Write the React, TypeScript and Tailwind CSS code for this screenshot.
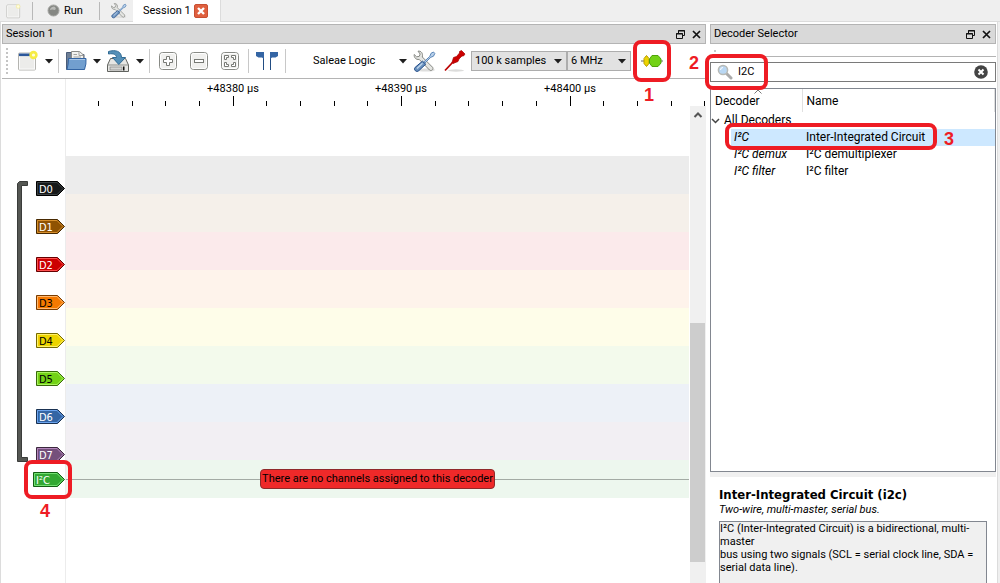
import React from "react";

const channels = [
  { name: "D0", fill: "#16191a", edge: "#000000", inner: "#3c4143", text: "#ffffff", lane: "bg-[#ececec]" },
  { name: "D1", fill: "#8f5202", edge: "#472901", inner: "#d78f2c", text: "#ffffff", lane: "bg-[#f5f0ea]" },
  { name: "D2", fill: "#cc0000", edge: "#660000", inner: "#ff5050", text: "#ffffff", lane: "bg-[#fbeaeb]" },
  { name: "D3", fill: "#f57900", edge: "#7a3c00", inner: "#ffb870", text: "#000000", lane: "bg-[#fef3eb]" },
  { name: "D4", fill: "#edd400", edge: "#766a00", inner: "#fff06a", text: "#000000", lane: "bg-[#fefde9]" },
  { name: "D5", fill: "#73d216", edge: "#39690b", inner: "#a9f35e", text: "#000000", lane: "bg-[#f3faec]" },
  { name: "D6", fill: "#3465a4", edge: "#1a3252", inner: "#6ba4ef", text: "#ffffff", lane: "bg-[#edf1f7]" },
  { name: "D7", fill: "#75507b", edge: "#3a283d", inner: "#b385bb", text: "#ffffff", lane: "bg-[#f2eff3]" },
];

const decoders = [
  { id: "I²C", name: "Inter-Integrated Circuit", selected: true },
  { id: "I²C demux", name: "I²C demultiplexer", selected: false },
  { id: "I²C filter", name: "I²C filter", selected: false },
];

const majorTicks = [
  { x: 167, label: "+48380 µs" },
  { x: 335, label: "+48390 µs" },
  { x: 504, label: "+48400 µs" },
];
const minorTicks = [32, 66, 99, 133, 200, 234, 268, 301, 369, 402, 436, 470, 537, 571, 605, 638];

function Tag({ name, fill, edge, inner, text, wide = false }: {
  name: string; fill: string; edge: string; inner: string; text: string; wide?: boolean;
}) {
  const w = wide ? 32 : 29;
  return (
    <svg width={w} height="15" viewBox={`0 0 ${w} 15`} className="block shrink-0">
      <path d={`M.5 .5H${w - 7.5}L${w - 0.5} 7.5L${w - 7.5} 14.5H.5Z`} fill={fill} stroke={edge} />
      <path d={`M1.5 1.5H${w - 8}L${w - 2} 7.5L${w - 8} 13.5H1.5Z`} fill="none" stroke={inner} />
      <text x="3" y="12" fontSize="11" fill={text} className="font-['DejaVu_Sans_Condensed','DejaVu_Sans',sans-serif]">{name}</text>
    </svg>
  );
}

function Arrow() {
  return (
    <svg width="8" height="5" viewBox="0 0 8 5" className="shrink-0">
      <path d="M0 0H8L4 4.6Z" fill="#1e1e1e" />
    </svg>
  );
}

function Separator() {
  return <div className="h-6 w-px shrink-0 bg-[#c8c8c8]" />;
}

function NewIcon({ size, faded = false }: { size: number; faded?: boolean }) {
  return (
    <svg width={size} height={size} viewBox="0 0 24 24" className="shrink-0">
      <rect x="2.5" y="4" width="17" height="17" rx="1" fill="#ececea" stroke="#b4b4b0" />
      <rect x="3.5" y="5" width="15" height="15" fill="none" stroke="#fbfbfb" />
      {!faded && <rect x="3" y="4.5" width="13" height="2.6" fill="#2b579b" />}
      <circle cx="17.5" cy="6" r={faded ? 3 : 4.2} fill={faded ? "#f5efb0" : "#f6ec45"} />
      <circle cx="17.5" cy="6" r="1.6" fill="#fffde0" />
    </svg>
  );
}

function FolderIcon() {
  return (
    <svg width="24" height="24" viewBox="0 0 24 24" className="shrink-0">
      <path d="M2.5 20.5V3.5H9L10.5 5.5H20V20.5Z" fill="#6e7f96" stroke="#4a5c78" />
      <path d="M7.5 13V2.5H15.5L19.5 6V13Z" fill="#f2f2f0" stroke="#8b8b88" />
      <path d="M15 2.5V6.5H19M9.5 5.5H13M9.5 8H17" fill="none" stroke="#a3a3a0" />
      <path d="M4.5 9.5H22Q22.5 15 20.5 20.5H3Q4.5 15 4.5 9.5Z" fill="#729fcf" stroke="#3465a4" />
      <path d="M5.5 10.5H21" stroke="#a9c7e8" />
    </svg>
  );
}

function SaveIcon() {
  return (
    <svg width="24" height="24" viewBox="0 0 24 24" className="shrink-0">
      <path d="M4.5 9.5H19.5L22.5 16V22.5H1.5V16Z" fill="#e6e6e3" stroke="#60625e" />
      <path d="M1.5 16H22.5" stroke="#8f918d" />
      <rect x="4" y="18" width="12" height="3" fill="#d4d5d2" stroke="#777" strokeWidth=".6" />
      <rect x="17" y="17.5" width="1.5" height="4" fill="#111" />
      <path d="M2.5 2.5C9 .5 15.5 2 15.5 8.5H19.5L12.8 15.5L6.5 8.5H10.5C10.5 6 8 4 2.5 5Z" fill="#5590b8" stroke="#2f6a94" />
    </svg>
  );
}

function ZoomIcon({ kind }: { kind: "in" | "out" | "fit" }) {
  return (
    <svg width="20" height="20" viewBox="0 0 20 20">
      <rect x="1.5" y="1.5" width="17" height="17" rx="3" fill="#f0f0ee" stroke="#888a85" />
      <rect x="2.5" y="2.5" width="15" height="15" rx="2" fill="none" stroke="#fff" />
      <g fill="#fff" stroke="#777974">
        {kind === "in" && <path d="M8.5 5.5H11.5V8.5H14.5V11.5H11.5V14.5H8.5V11.5H5.5V8.5H8.5Z" />}
        {kind === "out" && <rect x="5.5" y="8.5" width="9" height="3" />}
        {kind === "fit" && (
          <path d="M4.5 4.5H8.5V6.5H6.5V8.5H4.5ZM15.5 4.5H11.5V6.5H13.5V8.5H15.5ZM4.5 15.5H8.5V13.5H6.5V11.5H4.5ZM15.5 15.5H11.5V13.5H13.5V11.5H15.5Z" />
        )}
      </g>
    </svg>
  );
}

function FlagsIcon() {
  return (
    <svg width="24" height="20" viewBox="0 0 24 20">
      <path d="M1 1.5H8.5V19M23 1.5H15.5V19" fill="none" stroke="#224d83" />
      <path d="M1 1H9V8L7 6.5H3.5L1 5Z" fill="#3465a4" />
      <path d="M23 1H15V8L17 6.5H20.5L23 5Z" fill="#3465a4" />
    </svg>
  );
}

function ToolsIcon({ size }: { size: number }) {
  return (
    <svg width={size} height={size} viewBox="0 0 24 24" className="shrink-0">
      <ellipse cx="14" cy="21" rx="9" ry="1.6" fill="#dededd" />
      <path d="M6 2.2L8.2 5L7.2 7.4L4.6 7.8L2.2 5.5C1.8 8.5 4 11 7.2 10.4L17.5 21C19.2 22.6 22 20.2 20.6 18.3L10.3 8C11.2 4.5 9.2 1.6 6 2.2Z" fill="#e4e5e2" stroke="#858782" />
      <path d="M21.5 3L19 4.3L17.8 7.4L11.5 13.2L12.6 14.3L18.8 8.3L21.5 7.2L22.8 4.5Z" fill="#b8d0ea" stroke="#4e7cb1" strokeWidth=".9" />
      <path d="M10.5 12.2L13.7 15.2L6.8 21.7C4.5 23.8 1 20.8 3.2 18.3Z" fill="#6c93bf" stroke="#204a87" />
      <path d="M10.5 14.2L5 19.5" stroke="#c3d9ef" strokeWidth="1.3" />
    </svg>
  );
}

function ProbeIcon() {
  return (
    <svg width="24" height="24" viewBox="0 0 24 24">
      <ellipse cx="14" cy="21.5" rx="8" ry="1.2" fill="#dcdcdb" />
      <path d="M3 21.5L11 13" stroke="#b00" strokeWidth="1.8" />
      <path d="M10 13.5L11.5 8.5L14.5 7.5L17.5 4L17.5 2.5L19.5 1.5L23 5L21.5 7L20 7L17 10L16 12.5L11 14.5Z" fill="#cc0000" stroke="#a40000" strokeWidth=".7" />
    </svg>
  );
}

function WindowButtons() {
  return (
    <div className="flex items-center gap-[7px]">
      <button aria-label="Float" className="block">
        <svg width="9" height="9" viewBox="0 0 9 9">
          <path d="M2.5 3V.5H8.5V5.5H6.5M2 1H9" fill="none" stroke="#111" />
          <path d="M.5 3.5H6.5V8.5H.5ZM0 4H7" fill="none" stroke="#111" />
        </svg>
      </button>
      <button aria-label="Close" className="block">
        <svg width="9" height="9" viewBox="0 0 9 9">
          <path d="M1 1L8 8M8 1L1 8" stroke="#111" strokeWidth="1.7" />
        </svg>
      </button>
    </div>
  );
}

function TitleBar({ title }: { title: string }) {
  return (
    <div className="flex h-5 shrink-0 items-center justify-between border border-[#b4b4b4] bg-[#d9d9d9] pr-1 pl-[3px]">
      <h2>{title}</h2>
      <WindowButtons />
    </div>
  );
}

function Combo({ label, options, className }: { label: string; options: string[]; className: string }) {
  return (
    <div className={`relative flex items-center ${className}`}>
      <select aria-label={label} className="h-5 w-full appearance-none border border-[#adadad] bg-[#e2e2e2] pl-[3px] outline-none">
        {options.map((o) => <option key={o}>{o}</option>)}
      </select>
      <span className="pointer-events-none absolute right-[5px]"><Arrow /></span>
    </div>
  );
}

const frame = "pointer-events-none absolute z-10 rounded-lg border-[4px] border-[#ee1c24]";
const mark = "pointer-events-none absolute z-10 font-['Liberation_Sans',Arial,sans-serif] text-lg leading-5 font-bold not-italic text-[#ee1c24]";

function TopBar() {
  return (
    <header className="flex h-[22px] shrink-0 items-stretch border-b border-[#dcdcdc]">
      <div className="flex w-[133px] items-center">
        <button aria-label="New session" className="ml-[5px]"><NewIcon size={18} faded /></button>
        <div className="ml-[9px] h-[18px] w-px bg-[#b8b8b8]" />
        <button className="ml-3.5 flex items-center gap-1">
          <svg width="13" height="13" viewBox="0 0 13 13">
            <circle cx="6.5" cy="6.5" r="5.5" fill="#858783" stroke="#a4a5a2" />
            <path d="M3 6Q3 3 7 2.5Q10 4 8 6Q5 5 3 6" fill="#b9bab7" />
          </svg>
          Run
        </button>
        <div className="ml-4 h-[18px] w-px bg-[#b8b8b8]" />
        <button aria-label="Settings" className="ml-2.5"><ToolsIcon size={17} /></button>
      </div>
      <div className="-mb-px flex w-[88px] items-center justify-between border-r border-[#dcdcdc] bg-white pr-3 pl-2.5">
        <span>Session 1</span>
        <button aria-label="Close session">
          <svg width="14" height="14" viewBox="0 0 14 14">
            <rect x=".5" y=".5" width="13" height="13" rx="1.5" fill="#e0603f" stroke="#c84f32" />
            <path d="M4 4L10 10M10 4L4 10" stroke="#fff" strokeWidth="2.4" />
          </svg>
        </button>
      </div>
    </header>
  );
}

function Toolbar() {
  return (
    <div className="flex h-[35px] shrink-0 items-center gap-[5px] border-b border-[#b4b4b4]">
      <div className="mr-[3px] ml-1 h-[26px] border-l-2 border-dotted border-[#c4c4c4]" />
      <button aria-label="New" className="flex items-center gap-[5px]"><NewIcon size={24} /><Arrow /></button>
      <Separator />
      <button aria-label="Open" className="flex items-center gap-[5px]"><FolderIcon /><Arrow /></button>
      <button aria-label="Save" className="flex items-center gap-1.5"><SaveIcon /><Arrow /></button>
      <Separator />
      <button aria-label="Zoom in" className="flex w-[26px] justify-center"><ZoomIcon kind="in" /></button>
      <button aria-label="Zoom out" className="flex w-[26px] justify-center"><ZoomIcon kind="out" /></button>
      <button aria-label="Zoom to fit" className="flex w-[26px] justify-center"><ZoomIcon kind="fit" /></button>
      <Separator />
      <button aria-label="Show cursors" className="flex w-[26px] justify-center"><FlagsIcon /></button>
      <Separator />
      <button className="flex w-[116px] items-center justify-between pl-[22px]"><span>Saleae Logic</span><Arrow /></button>
      <button aria-label="Configure device"><ToolsIcon size={24} /></button>
      <button aria-label="Configure channels" className="flex w-[25px] justify-center"><ProbeIcon /></button>
      <div className="flex">
        <Combo label="Sample count" options={["100 k samples", "1 M samples"]} className="w-24" />
        <Combo label="Sample rate" options={["6 MHz", "12 MHz"]} className="w-16" />
      </div>
      <div className="relative">
        <button aria-label="Add protocol decoder" className="flex w-8 justify-center">
          <svg width="22" height="14" viewBox="0 0 22 14">
            <path d="M0 7H22" stroke="#666" />
            <path d="M5.5 1.5L8 4.5V9.5L5.5 12.5L3 9.5V4.5Z" fill="#edd400" stroke="#b89b00" />
            <path d="M11 1.5H17L20 5V9L17 12.5H11L8.5 9V5Z" fill="#73d216" stroke="#4fa30a" />
          </svg>
        </button>
        <div className={`${frame} -inset-x-[3px] -inset-y-[14px]`} />
        <div className={`${mark} top-[31px] left-2`}>1</div>
        <div className={`${mark} -top-[1px] left-[53px]`}>2</div>
      </div>
    </div>
  );
}

function Ruler() {
  return (
    <svg width="100%" height="27" className="block shrink-0">
      {majorTicks.map(({ x, label }) => (
        <g key={x}>
          <text x={x} y="13" fontSize="11" textAnchor="middle" fill="#000">{label}</text>
          <rect x={x} y="17" width="1" height="10" />
        </g>
      ))}
      {minorTicks.map((x) => <rect key={x} x={x} y="22" width="1" height="5" />)}
    </svg>
  );
}

function TraceView() {
  return (
    <div className="flex min-h-0 flex-1">
      <div className="flex w-16 shrink-0 flex-col items-end border-r border-[#ececec] pt-[102px]">
        <div className="flex gap-2">
          <svg width="11" height="281" viewBox="0 0 11 281" className="block">
            <path d="M2.5 .5H10.5V4.5H4.5V276.5H10.5V280.5H.5V2.5Z" fill="#555753" stroke="#3a3c3a" />
          </svg>
          <div className="flex flex-col gap-[23px]">
            {channels.map((c) => <Tag key={c.name} {...c} />)}
          </div>
        </div>
        <div className="relative mt-2.5">
          <Tag name="I²C" fill="#33a833" edge="#135f13" inner="#73e073" text="#ffffff" wide />
          <div className={`${frame} -inset-y-[12px] -right-[7px] -left-[9px]`} />
          <div className={`${mark} top-[29px] left-[7px]`}>4</div>
        </div>
      </div>
      <div className="flex min-w-0 flex-1 flex-col">
        <Ruler />
        <div className="flex min-h-0 flex-1">
          <div className="mr-px flex-1 pt-[50px]">
            {channels.map((c) => <div key={c.name} className={`h-[38px] ${c.lane}`} />)}
            <div className="flex h-[38px] items-center bg-[#edf7ee]">
              <div className="h-px flex-1 bg-[#a3aba4]" />
              <div className="flex h-5 w-[235px] items-center justify-center rounded border border-[#8f2a2a] bg-[#ef2929] whitespace-nowrap">
                There are no channels assigned to this decoder
              </div>
              <div className="h-px flex-1 bg-[#a3aba4]" />
            </div>
          </div>
          <div className="flex w-4 flex-col bg-[#f0f0f0] pb-[21px]">
            <svg width="16" height="17" viewBox="0 0 16 17" className="shrink-0">
              <path d="M4.5 11L8 7.5L11.5 11" fill="none" stroke="#555" strokeWidth="2" />
            </svg>
            <div className="flex-[200]" />
            <div className="mr-px flex-[239] bg-[#cdcdcd]" />
          </div>
        </div>
      </div>
    </div>
  );
}

function DecoderTree() {
  return (
    <div className="h-[384px] shrink-0 border border-[#828790] text-xs">
      <table className="w-full table-fixed border-collapse text-left">
        <thead>
          <tr className="h-[23px]">
            <th scope="col" className="relative w-[91px] border-r border-[#e0e0e0] p-0 pl-1 font-normal">
              Decoder
              <svg width="8" height="5" viewBox="0 0 8 5" className="absolute top-0 left-[43px]">
                <path d="M.5 4.5L4 1L7.5 4.5" fill="none" stroke="#777" />
              </svg>
            </th>
            <th scope="col" className="border-r border-[#e0e0e0] p-0 pl-1 font-normal">Name</th>
          </tr>
        </thead>
        <tbody className="leading-[17px]">
          <tr className="h-[17px]">
            <td colSpan={2} className="p-0">
              <div className="flex items-center gap-1">
                <svg width="9" height="6" viewBox="0 0 9 6">
                  <path d="M1 1L4.5 4.5L8 1" fill="none" stroke="#444" strokeWidth="1.5" />
                </svg>
                All Decoders
              </div>
            </td>
          </tr>
          {decoders.map((d) => (
            <tr key={d.id} className={d.selected ? "h-[17px] bg-[linear-gradient(to_right,white_20px,#cde8ff_20px)]" : "h-[17px]"}>
              <td className="relative p-0 pl-[23px] italic">
                {d.id}
                {d.selected && (
                  <>
                    <div className={`${frame} -top-[6px] left-[14px] h-[27px] w-[212px]`} />
                    <div className={`${mark} top-0 left-[233px]`}>3</div>
                  </>
                )}
              </td>
              <td className="p-0 pl-1">{d.name}</td>
            </tr>
          ))}
        </tbody>
      </table>
    </div>
  );
}

function DecoderPanel() {
  return (
    <aside className="flex w-[286px] shrink-0 flex-col">
      <TitleBar title="Decoder Selector" />
      <div className="h-[13px] shrink-0 border-b border-[#b4b4b4] pt-1.5 pl-1">
        <div className="size-0.5 bg-[#c8c8c8]" />
      </div>
      <div className="relative mt-[5px] flex h-5 shrink-0 items-center border border-[#7a7a7a] pr-[7px] pl-1.5">
        <svg width="16" height="16" viewBox="0 0 16 16" className="shrink-0">
          <path d="M9.5 9.5L14 14" stroke="#aaa" strokeWidth="3" strokeLinecap="round" />
          <circle cx="6" cy="6" r="4.6" fill="#b9d7f3" stroke="#b7b9b5" strokeWidth="1.5" />
          <path d="M3.5 6Q3.5 3.5 6 3.5" fill="none" stroke="#fff" />
        </svg>
        <input aria-label="Filter decoders" defaultValue="I2C" className="min-w-0 flex-1 bg-transparent pl-[5px] outline-none" />
        <button aria-label="Clear filter">
          <svg width="14" height="14" viewBox="0 0 14 14" className="block">
            <circle cx="7" cy="7" r="6.8" fill="#444" />
            <path d="M4.5 4.5L9.5 9.5M9.5 4.5L4.5 9.5" stroke="#fff" strokeWidth="2" />
          </svg>
        </button>
        <div className={`${frame} -top-[9px] -left-[6px] h-[36px] w-[63px]`} />
      </div>
      <div className="h-1.5 shrink-0" />
      <DecoderTree />
      <div className="h-[5px] shrink-0 bg-[#f0f0f0]" />
      <section className="flex min-h-0 flex-1 flex-col pt-2.5 pr-[9px] pl-[9px]">
        <h3 className="font-['DejaVu_Sans_Condensed','DejaVu_Sans',sans-serif] text-[13px] leading-4 font-bold whitespace-nowrap">Inter-Integrated Circuit (i2c)</h3>
        <p className="leading-[13px] italic">Two-wire, multi-master, serial bus.</p>
        <div className="mt-[5px] flex-1 border border-b-0 border-[#828790] bg-[#f0f0f0] leading-[13px] whitespace-nowrap">
          I²C (Inter-Integrated Circuit) is a bidirectional, multi-<br />
          master<br />
          bus using two signals (SCL = serial clock line, SDA =<br />
          serial data line).
        </div>
      </section>
    </aside>
  );
}

export default function App() {
  return (
    <div className="flex h-screen flex-col overflow-hidden bg-[#efefef] font-[Roboto,'Noto_Sans',sans-serif] text-[11px] leading-4 text-black">
      <TopBar />
      <main className="mr-0.5 flex min-h-0 flex-1 gap-1 border-x border-[#dcdcdc] bg-white pt-0.5 pr-px pl-px">
        <section className="flex min-w-0 flex-1 flex-col">
          <TitleBar title="Session 1" />
          <Toolbar />
          <TraceView />
        </section>
        <DecoderPanel />
      </main>
    </div>
  );
}
